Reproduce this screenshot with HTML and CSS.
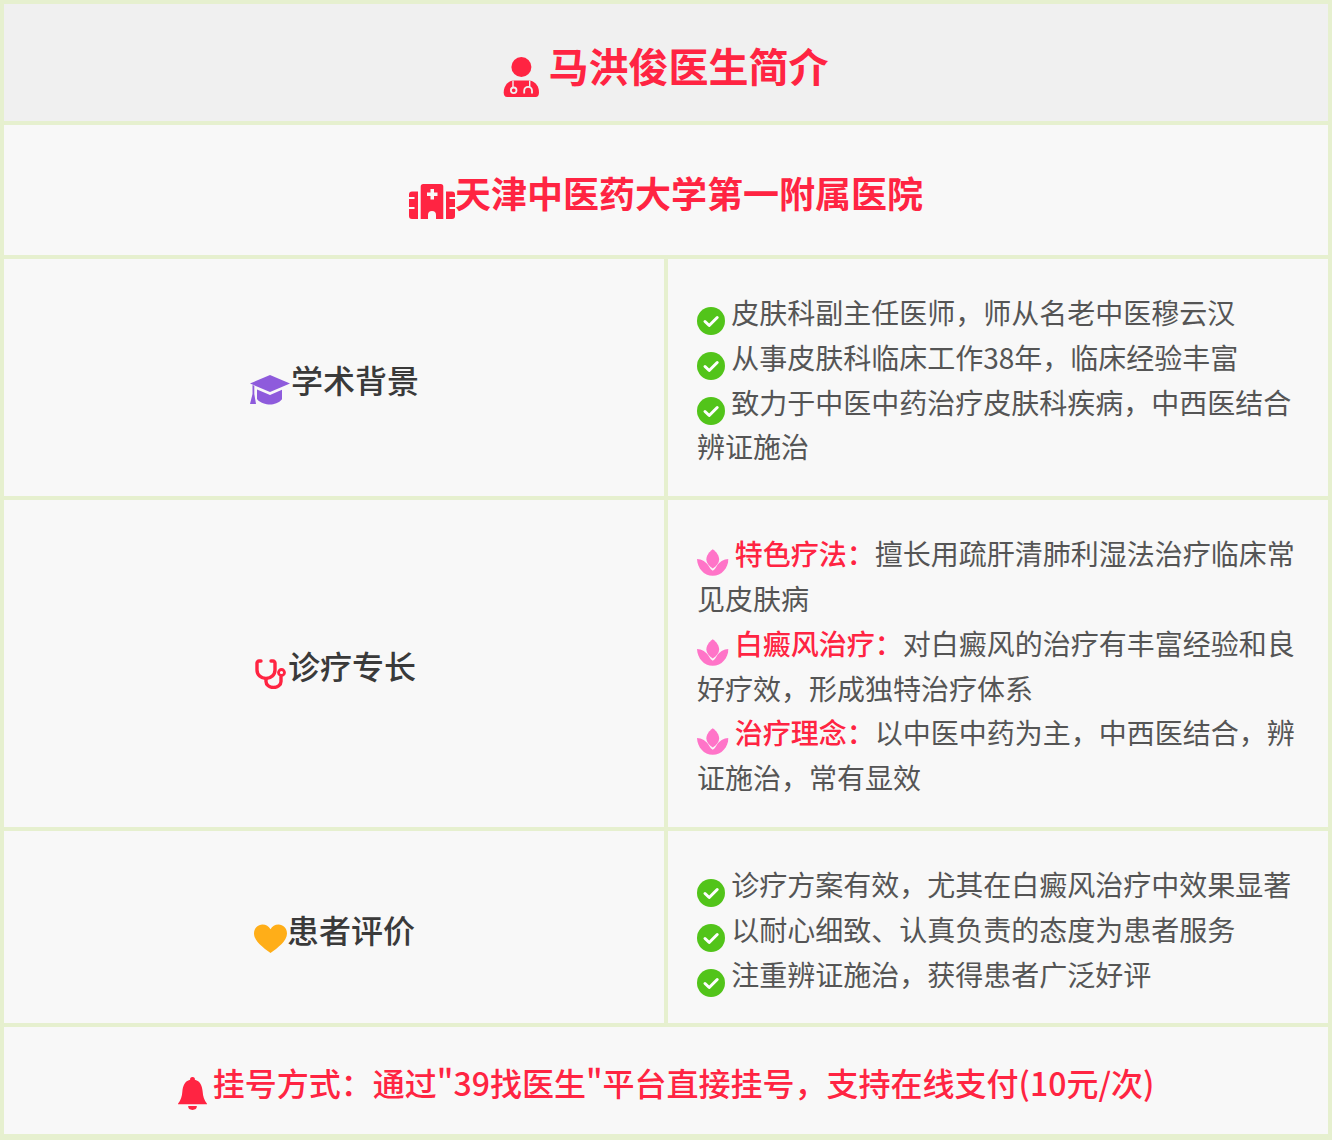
FILE: index.html
```html
<!DOCTYPE html>
<html lang="zh">
<head>
<meta charset="utf-8">
<title>马洪俊医生简介</title>
<link rel="stylesheet" href="styles.css">
</head>
<body>
<svg class="sprite" aria-hidden="true">
  <symbol id="check" viewBox="0 0 28 28">
    <circle cx="14" cy="14" r="14" fill="#52c41a"/>
    <path d="M8 14.500l4.200 4 8-8" fill="none" stroke="#fff" stroke-width="3" stroke-linecap="round" stroke-linejoin="round"/>
  </symbol>
  <symbol id="lotus" viewBox="0 0 32 27">
    <path d="M16 0c3.800 2.600 6.500 6.500 6.500 10.500 0 3.500-2.500 6.500-6.500 9-4-2.500-6.500-5.500-6.500-9C9.500 6.500 12.200 2.600 16 0z" fill="#ff74c8"/>
    <path d="M0 10c4.800 0 9.500 2.800 12.500 8 .9 1.600 2.100 2.900 3.500 3.800 1.400-.9 2.600-2.200 3.500-3.800 3-5.200 7.700-8 12.500-8-.5 9.500-6.900 17-16 17S.5 19.500 0 10z" fill="#ff74c8"/>
  </symbol>
</svg>
<main class="card">
  <h1 class="row title">
    <svg class="icon-doctor" viewBox="-0.700 0 36 40" aria-hidden="true">
      <circle cx="17.700" cy="10" r="10" fill="#ff2442"/>
      <path d="M9 23.500h17c6 1 9.300 6 9.300 12 0 2.500-1 4.500-3.500 4.500H3.500C1 40 0 38 0 35.500c0-6 3.500-11 9-12z" fill="#ff2442"/>
      <path d="M9.300 23.500v6.500M26 23.500v6.500" stroke="#f0f0f0" stroke-width="1.400"/>
      <circle cx="10" cy="33.300" r="2.800" fill="none" stroke="#f0f0f0" stroke-width="1.800"/>
      <path d="M20.500 36.500v-2.800a3.900 3.900 0 0 1 7.800 0v2.800" fill="none" stroke="#f0f0f0" stroke-width="1.800"/>
    </svg>
    <span class="title-text">马洪俊医生简介</span>
  </h1>
  <h2 class="row hospital">
    <svg class="icon-hospital" viewBox="0 0 46 35" aria-hidden="true">
      <path d="M11.700 2.500A2.500 2.500 0 0 1 14.200 0h17.600a2.500 2.500 0 0 1 2.500 2.500V35H27v-4a4 4 0 0 0-8 0v4h-7.300z" fill="#ff2442"/>
      <path d="M21.500 5h3.500v3.500h3.500V12H25v3.500h-3.500V12H18V8.500h3.500z" fill="#f8f8f8"/>
      <path d="M9 7.500V35H3a3 3 0 0 1-3-3V10.500a3 3 0 0 1 3-3zM37 7.500h6a3 3 0 0 1 3 3V32a3 3 0 0 1-3 3h-6z" fill="#ff2442"/>
      <path d="M0 14h5.500M0 24h5.500M40.500 14H46M40.500 24H46" stroke="#f8f8f8" stroke-width="1.800"/>
    </svg><span>天津中医药大学第一附属医院</span>
  </h2>

  <div class="section">
    <h3 class="label">
      <svg class="icon-label icon-cap" viewBox="0 0 42 30" aria-hidden="true">
        <path d="M21 0l20 8.500L21 17 1 8.500z" fill="#8e5bdc"/>
        <path d="M8 14.500l13 5.500 12-5.200v9.500C30 28 25 29.500 21 29.500S11 28 8 24z" fill="#8e5bdc"/>
        <path d="M3.500 10l1.800.8v8.200l1.700 10H1l2.500-10z" fill="#8e5bdc"/>
      </svg><span class="label-text">学术背景</span>
    </h3>
    <ul class="content">
      <li><svg class="icon-check"><use href="#check"/></svg> 皮肤科副主任医师，师从名老中医穆云汉</li>
      <li><svg class="icon-check"><use href="#check"/></svg> 从事皮肤科临床工作38年，临床经验丰富</li>
      <li><svg class="icon-check"><use href="#check"/></svg> 致力于中医中药治疗皮肤科疾病，中西医结合辨证施治</li>
    </ul>
  </div>

  <div class="section">
    <h3 class="label">
      <svg class="icon-label icon-steth" viewBox="0 0 36 30" aria-hidden="true">
        <g transform="translate(3)">
          <path d="M6 2H4a2 2 0 0 0-2 2v7a9 8.500 0 0 0 18 0V4a2 2 0 0 0-2-2h-2" fill="none" stroke="#ff2442" stroke-width="3.400" stroke-linecap="round"/>
          <path d="M11 20v2.500a7.500 6 0 0 0 15 0V18" fill="none" stroke="#ff2442" stroke-width="3.400" stroke-linecap="round"/>
          <circle cx="26.500" cy="13.500" r="3" fill="none" stroke="#ff2442" stroke-width="2.800"/>
        </g>
      </svg><span class="label-text">诊疗专长</span>
    </h3>
    <ul class="content">
      <li><svg class="icon-lotus"><use href="#lotus"/></svg> <strong>特色疗法：</strong>擅长用疏肝清肺利湿法治疗临床常见皮肤病</li>
      <li><svg class="icon-lotus"><use href="#lotus"/></svg> <strong>白癜风治疗：</strong>对白癜风的治疗有丰富经验和良好疗效，形成独特治疗体系</li>
      <li><svg class="icon-lotus"><use href="#lotus"/></svg> <strong>治疗理念：</strong>以中医中药为主，中西医结合，辨证施治，常有显效</li>
    </ul>
  </div>

  <div class="section">
    <h3 class="label">
      <svg class="icon-label icon-heart" viewBox="0 0 34 30" aria-hidden="true">
        <path transform="translate(-2.500)" d="M20 29C13 24 3.500 17 3.500 9.500 3.500 4 7.500 .5 12 .5c3.500 0 6.300 1.700 8 4.800C21.700 2.200 24.500 .5 28 .5c4.500 0 8.500 3.500 8.500 9C36.500 17 27 24 20 29z" fill="#ffae18"/>
      </svg><span class="label-text">患者评价</span>
    </h3>
    <ul class="content">
      <li><svg class="icon-check"><use href="#check"/></svg> 诊疗方案有效，尤其在白癜风治疗中效果显著</li>
      <li><svg class="icon-check"><use href="#check"/></svg> 以耐心细致、认真负责的态度为患者服务</li>
      <li><svg class="icon-check"><use href="#check"/></svg> 注重辨证施治，获得患者广泛好评</li>
    </ul>
  </div>

  <p class="row booking">
    <svg class="icon-bell" viewBox="0 0 30 34" aria-hidden="true">
      <path d="M15 0a2.500 2.500 0 0 1 2.500 2.700C23 4 25 9 25.500 15c.3 5 1.500 9 4.500 12.500V28H0v-.5C3 24 4.200 20 4.500 15 5 9 7 4 12.500 2.700A2.500 2.500 0 0 1 15 0z" fill="#ff2442"/>
      <path d="M10.500 30h9a4.500 4 0 0 1-9 0z" fill="#ff2442"/>
    </svg> <span>挂号方式：通过"39找医生"平台直接挂号，支持在线支付(10元/次)</span>
  </p>
</main>
</body>
</html>
```
FILE: styles.css
```css
* {
  box-sizing: border-box;
}

html,
body {
  margin: 0;
  padding: 0;
}

body {
  width: 1332px;
  background: #e6f0cf;
  font-family: "Noto Sans CJK SC", "Noto Sans", sans-serif;
  line-height: 1.6;
  color: #555;
}

.sprite {
  display: none;
}

.card {
  display: grid;
  grid-template-columns: 660px 660px;
  gap: 4px;
  padding: 4px;
  background: #e6f0cf;
}

.row {
  grid-column: 1 / -1;
  margin: 0;
  text-align: center;
  color: #ff2442;
  background: #f8f8f8;
}

.title {
  height: 117px;
  background: #f0f0f0;
  padding-top: 29px;
  font-size: 40px;
  font-weight: 700;
  line-height: 64px;
}

.hospital {
  height: 130px;
  padding-top: 38px;
  font-size: 36px;
  font-weight: 700;
  line-height: 58px;
}

.section {
  display: contents;
}

.label {
  margin: 0;
  display: flex;
  align-items: center;
  justify-content: center;
  background: #f8f8f8;
  font-size: 32px;
  font-weight: 500;
  color: #3a3a3a;
}

.label-text {
  margin-top: 4px;
}

.content {
  margin: 0;
  padding: 31px 29px 27px;
  list-style: none;
  background: #f8f8f8;
  font-size: 28px;
  font-weight: 400;
  line-height: 44.800px;
}

.content strong {
  color: #ff2442;
  font-weight: 500;
}

.booking {
  height: 107px;
  padding-top: 30px;
  font-size: 32px;
  font-weight: 500;
  line-height: 51px;
}

.icon-doctor {
  width: 36px;
  height: 40px;
  vertical-align: -15px;
}

.icon-hospital {
  width: 46px;
  height: 35px;
  vertical-align: -11px;
}

.icon-label {
  height: 30px;
  flex: none;
}

.icon-cap {
  width: 42px;
  margin-top: 24px;
}

.icon-steth {
  width: 36px;
  margin-top: 21px;
}

.icon-heart {
  width: 34px;
  margin-top: 24px;
}

.icon-check {
  width: 28px;
  height: 28px;
  margin-bottom: -2px;
  vertical-align: -9px;
}

.icon-lotus {
  width: 31.500px;
  height: 27px;
  margin-bottom: -2px;
  vertical-align: -9px;
}

.icon-bell {
  width: 29px;
  height: 33px;
  margin-right: -1px;
  vertical-align: -14px;
}
```
